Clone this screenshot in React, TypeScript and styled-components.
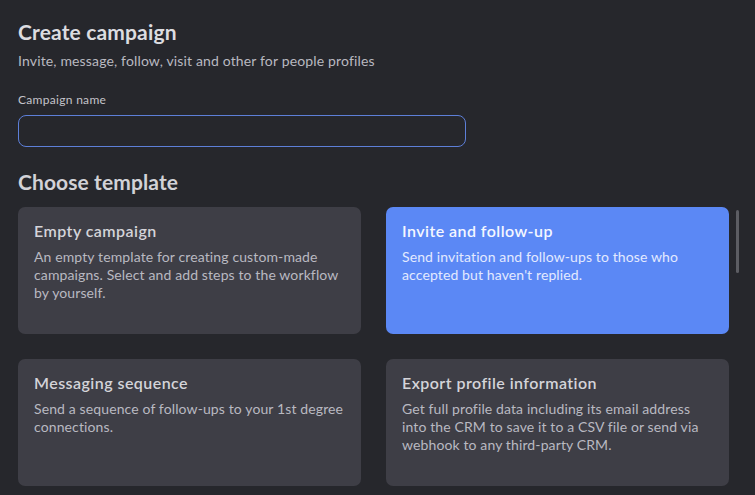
import styled, { createGlobalStyle } from "styled-components";

const Global = createGlobalStyle`
  html, body {
    margin: 0;
    padding: 0;
    background: #26272c;
  }
  * { box-sizing: border-box; }
`;

const Page = styled.div`
  position: relative;
  width: 755px;
  height: 495px;
  overflow: hidden;
  background: #26272c;
  font-family: Lato, "Noto Sans", sans-serif;
  color: #d7d7dc;
  padding: 19px 26px 0 18px;
`;

const Title = styled.h1`
  margin: 0;
  font-size: 21px;
  font-weight: 700;
  line-height: 26px;
  letter-spacing: 0.15px;
  color: #dcdce0;
`;

const Subtitle = styled.p`
  margin: 7px 0 0;
  font-size: 14px;
  line-height: 18px;
  letter-spacing: 0.15px;
  color: #b9b9c0;
`;

const Label = styled.label`
  display: block;
  margin-top: 23px;
  font-size: 12px;
  line-height: 14px;
  letter-spacing: 0.3px;
  color: #c4c4ca;
`;

const Input = styled.input`
  display: block;
  margin-top: 8px;
  width: 448px;
  height: 32px;
  border: 1px solid #5d7fd8;
  border-radius: 8px;
  background: #26272c;
  outline: none;
  color: #e0e0e4;
  font: inherit;
  font-size: 14px;
  padding: 0 12px;
`;

const SectionTitle = styled.h2`
  margin: 22px 0 0;
  font-size: 21px;
  font-weight: 700;
  line-height: 26px;
  letter-spacing: 0.1px;
  color: #d2d2d7;
`;

const Grid = styled.div`
  margin-top: 12px;
  display: grid;
  grid-template-columns: 343px 343px;
  column-gap: 25px;
  row-gap: 25px;
`;

const Card = styled.div<{ $active?: boolean }>`
  height: 127px;
  border-radius: 7px;
  background: ${(p) => (p.$active ? "#5b88f5" : "#3e3e46")};
  padding: 14px 16px;
  cursor: pointer;
`;

const CardTitle = styled.div<{ $active?: boolean }>`
  font-size: 16px;
  font-weight: 600;
  line-height: 20px;
  letter-spacing: 0.45px;
  color: ${(p) => (p.$active ? "#f4f7ff" : "#d4d4d9")};
`;

const CardText = styled.div<{ $active?: boolean }>`
  margin-top: 7px;
  font-size: 14px;
  line-height: 18px;
  letter-spacing: 0.12px;
  color: ${(p) => (p.$active ? "#e3eaff" : "#b9b9c1")};
`;

const Scrollbar = styled.div`
  position: absolute;
  right: 16px;
  top: 210px;
  width: 3px;
  height: 63px;
  border-radius: 2px;
  background: #5c5d63;
`;

const templates = [
  {
    title: "Empty campaign",
    text: "An empty template for creating custom-made campaigns. Select and add steps to the workflow by yourself.",
  },
  {
    title: "Invite and follow-up",
    text: "Send invitation and follow-ups to those who accepted but haven't replied.",
    active: true,
  },
  {
    title: "Messaging sequence",
    text: "Send a sequence of follow-ups to your 1st degree connections.",
  },
  {
    title: "Export profile information",
    text: "Get full profile data including its email address into the CRM to save it to a CSV file or send via webhook to any third-party CRM.",
  },
];

export default function App() {
  return (
    <>
      <Global />
      <Page>
        <Title>Create campaign</Title>
        <Subtitle>Invite, message, follow, visit and other for people profiles</Subtitle>
        <Label htmlFor="campaign-name">Campaign name</Label>
        <Input id="campaign-name" type="text" />
        <SectionTitle>Choose template</SectionTitle>
        <Grid>
          {templates.map((t) => (
            <Card key={t.title} $active={t.active}>
              <CardTitle $active={t.active}>{t.title}</CardTitle>
              <CardText $active={t.active}>{t.text}</CardText>
            </Card>
          ))}
        </Grid>
        <Scrollbar />
      </Page>
    </>
  );
}
